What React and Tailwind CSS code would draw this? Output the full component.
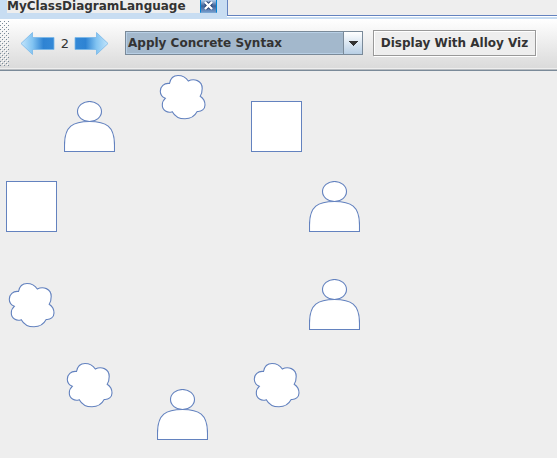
import React from "react";

const people = [
  "left-[64px] top-[30px]",
  "left-[309px] top-[110px]",
  "left-[309px] top-[208px]",
  "left-[157px] top-[318px]",
];
const squares = ["left-[251px] top-[30px]", "left-[6px] top-[110px]"];
const clouds = [
  "left-[159px] top-[3px]",
  "left-[8px] top-[211px]",
  "left-[66px] top-[291px]",
  "left-[253px] top-[291px]",
];

function Person({ place }) {
  return (
    <svg className={"absolute " + place} width="51" height="51" viewBox="0 0 51 51" fill="white" stroke="#6382bf" strokeWidth="1.1">
      <ellipse cx="25.5" cy="10.5" rx="12" ry="10" />
      <path d="M.5 50.5V44C.5 25 9 20.5 25.5 20.5S50.5 25 50.5 44V50.5Z" />
    </svg>
  );
}

function Cloud({ place }) {
  return (
    <svg className={"absolute " + place} width="48" height="47" viewBox="0 0 48 47" fill="white" stroke="#6382bf" strokeWidth="1.1">
      <path d="M10.5 9.5C11.5 4 15 1.5 19 1.5C23.5 1.5 27 3.5 29.3 7C35 4 43.2 6.5 43.2 14.5C43.2 17.5 42.6 20 41.2 22.3C44.5 24.5 46 27.5 46 31C46 35 42.5 38 38.2 37.5C35.5 42.5 30.5 44.8 26 44.8C20.5 44.8 15.5 41.8 13.3 37.7C8.5 39.5 3.3 36.5 3.3 31C3.3 28 4.3 26 6.3 24.3C3 22.8 1.3 20 1.3 17.2C1.3 12.5 5 8.8 10.5 9.5Z" />
    </svg>
  );
}

function Arrow({ right }) {
  const id = right ? "next-fill" : "previous-fill";
  return (
    <svg width="35" height="25" viewBox="0 0 35 25" className={right ? "-scale-x-100" : ""}>
      <defs>
        <linearGradient id={id}>
          <stop offset="0" stopColor="#c4e5fb" />
          <stop offset=".35" stopColor="#82c4f2" />
          <stop offset=".68" stopColor="#2e83d3" />
          <stop offset="1" stopColor="#3489d7" />
        </linearGradient>
      </defs>
      <path d="M1 12.5L12.5 1.5V6.5H34V18.5H12.5V23.5Z" fill={"url(#" + id + ")"} stroke="#79b8e9" strokeWidth=".8" strokeLinejoin="round" />
    </svg>
  );
}

function Grip() {
  return (
    <svg className="mt-px shrink-0" width="9" height="46" shapeRendering="crispEdges">
      <defs>
        <pattern id="grip-dots" width="4" height="4" patternUnits="userSpaceOnUse">
          <path d="M0 1h1v1H0zM2 3h1v1H2z" fill="#7a8a99" />
          <path d="M1 2h1v1H1zM3 0h1v1H3z" fill="white" />
        </pattern>
      </defs>
      <rect width="9" height="46" fill="url(#grip-dots)" />
    </svg>
  );
}

export default function App() {
  return (
    <div className="flex min-h-screen flex-col overflow-hidden bg-[#eeeeee] font-['DejaVu_Sans',sans-serif] text-[13px] font-bold text-[#333333]">
      <header className="flex h-[19px] border-b-2 border-[#c8ddf2]">
        <div className="flex w-[228px] shrink-0 items-start bg-[#c8ddf2] pl-[7px]">
          <span className="-mt-1 h-[17px] w-[193px] whitespace-nowrap bg-[#eeeeee] text-xs leading-5">MyClassDiagramLanguage</span>
          <button aria-label="Close tab" className="h-[13px] w-[17px] border-x border-b border-x-[#0084d6] border-b-[#7aa5d2] bg-linear-to-b from-[#b5cde9] via-[#3f6399] to-[#7398c8]">
            <svg width="15" height="12" viewBox="0 0 15 12">
              <path d="M4.5 2.5L10.5 8.5M10.5 2.5L4.5 8.5" stroke="#263f70" strokeWidth="4" />
              <path d="M4 2L11 9M11 2L4 9" stroke="white" strokeWidth="2.4" />
            </svg>
          </button>
        </div>
        <div className="-ml-px h-4 flex-1 border-b border-l border-[#6382bf] shadow-[0_1px_0_white]" />
      </header>

      <nav className="flex h-[52px] items-start border-b border-[#7a8a99] bg-linear-to-b from-white to-[#d9d9d9] shadow-[inset_0_-1px_0_#b8bcc0,inset_0_-2px_0_#eeeeee]">
        <Grip />
        <button aria-label="Previous" className="mt-3 ml-[11px] shrink-0"><Arrow /></button>
        <span className="mt-[15px] w-5 shrink-0 text-center font-normal leading-5">2</span>
        <button aria-label="Next" className="mt-3 -ml-px shrink-0"><Arrow right /></button>
        <div className="relative mt-3 ml-4 h-6 w-[238px] shrink-0">
          <select aria-label="Syntax" className="h-full w-full appearance-none border border-[#7a8a99] bg-[#a3b8cc] pl-0.5 text-xs font-bold leading-5 shadow-[inset_0_0_0_1px_#b8cfe5] outline-none">
            <option>Apply Concrete Syntax</option>
          </select>
          <span className="pointer-events-none absolute top-px right-px flex h-[22px] w-[19px] items-center justify-center border-l border-[#7a8a99] bg-linear-to-b from-white to-[#b8cfe5]">
            <svg width="10" height="5" viewBox="0 0 10 5" shapeRendering="crispEdges"><path d="M0 0H10L5 5Z" fill="#333333" /></svg>
          </span>
        </div>
        <button className="mt-[11px] ml-2.5 h-[26px] w-[163px] shrink-0 whitespace-nowrap border border-[#999999] bg-[#eeeeee] text-xs shadow-[1px_1px_0_white,inset_1px_1px_0_white]">Display With Alloy Viz</button>
      </nav>

      <main className="relative flex-1">
        {squares.map((place) => <div key={place} className={"absolute size-[51px] border border-[#6382bf] bg-white " + place} />)}
        {people.map((place) => <Person key={place} place={place} />)}
        {clouds.map((place) => <Cloud key={place} place={place} />)}
      </main>
    </div>
  );
}
